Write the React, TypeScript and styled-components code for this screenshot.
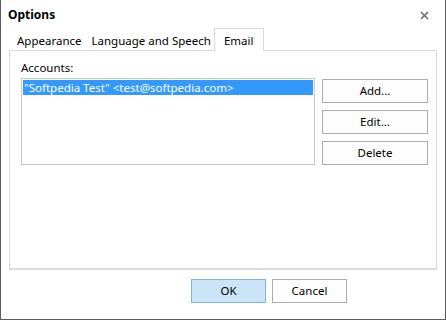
import React from "react";
import styled, { createGlobalStyle } from "styled-components";

const Global = createGlobalStyle`
  html, body { margin: 0; padding: 0; background: #ffffff; }
  body { font-family: "Noto Sans", "Open Sans", sans-serif; font-size: 11.5px; color: #000; }
  * { box-sizing: border-box; }
`;

const Window = styled.div`
  width: 446px;
  height: 320px;
  background: #ffffff;
  border-left: 1px solid #5c5c5c;
  border-right: 1px solid #5c5c5c;
  border-bottom: 1px solid #5c5c5c;
  display: flex;
  flex-direction: column;
`;

const TitleBar = styled.div`
  height: 28px;
  display: flex;
  align-items: center;
  justify-content: space-between;
  padding: 2px 16px 0 7px;
`;

const Title = styled.span`
  font-weight: 700;
  font-size: 12px;
  line-height: 1;
`;

const CloseIcon = styled.svg`
  width: 9px;
  height: 9px;
`;

const TabStrip = styled.div`
  height: 22px;
  display: flex;
  align-items: stretch;
  padding-left: 9px;
  position: relative;
  z-index: 1;
`;

const Tab = styled.div<{ $active?: boolean }>`
  display: flex;
  align-items: center;
  padding: 2px ${(p) => (p.$active ? "10px" : "2px")} 0 ${(p) => (p.$active ? "9px" : "6px")};
  margin-bottom: ${(p) => (p.$active ? "-1px" : "0")};
  background: #ffffff;
  border: 1px solid ${(p) => (p.$active ? "#d9d9d9" : "transparent")};
  border-bottom: none;
  white-space: nowrap;
  line-height: 1;
`;

const Panel = styled.div`
  margin: 0 8px;
  height: 220px;
  border: 1px solid #d9d9d9;
  border-bottom: 2px solid #dcdcdc;
  background: #ffffff;
  padding: 9px 8px 0 11px;
  display: flex;
  flex-direction: column;
`;

const Label = styled.div`
  line-height: 16px;
  height: 18px;
`;

const AccountsRow = styled.div`
  display: flex;
  gap: 7px;
  align-items: flex-start;
`;

const ListBox = styled.div`
  width: 296px;
  height: 87px;
  border: 1px solid #c8c8c8;
  padding: 1px;
  background: #fff;
`;

const ListItem = styled.div<{ $selected?: boolean }>`
  height: 15px;
  line-height: 15px;
  padding-left: 1px;
  background: ${(p) => (p.$selected ? "#3399ff" : "transparent")};
  color: ${(p) => (p.$selected ? "#ffffff" : "#000")};
  white-space: nowrap;
`;

const ButtonCol = styled.div`
  display: flex;
  flex-direction: column;
  gap: 7px;
  margin-top: 1px;
`;

const Button = styled.button<{ $primary?: boolean; $w: number }>`
  width: ${(p) => p.$w}px;
  height: 24px;
  font-family: inherit;
  font-size: 11.5px;
  color: #000;
  background: ${(p) => (p.$primary ? "#cce4f7" : "#fdfdfd")};
  border: 1px solid ${(p) => (p.$primary ? "#7fb4e5" : "#adadad")};
  padding: 0;
  line-height: 1;
  display: flex;
  align-items: center;
  justify-content: center;
`;

const Footer = styled.div`
  flex: 1;
  display: flex;
  justify-content: flex-end;
  align-items: flex-start;
  gap: 6px;
  padding: 9px 98px 0 0;
`;

export default function App() {
  return (
    <>
      <Global />
      <Window>
        <TitleBar>
          <Title>Options</Title>
          <CloseIcon viewBox="0 0 9 9">
            <path d="M1 1 L8 8 M8 1 L1 8" stroke="#707070" strokeWidth="1.6" />
          </CloseIcon>
        </TitleBar>
        <TabStrip>
          <Tab>Appearance</Tab>
          <Tab>Language and Speech</Tab>
          <Tab $active>Email</Tab>
        </TabStrip>
        <Panel>
          <Label>Accounts:</Label>
          <AccountsRow>
            <ListBox>
              <ListItem $selected>"Softpedia Test" &lt;test@softpedia.com&gt;</ListItem>
            </ListBox>
            <ButtonCol>
              <Button $w={106}>Add...</Button>
              <Button $w={106}>Edit...</Button>
              <Button $w={106}>Delete</Button>
            </ButtonCol>
          </AccountsRow>
        </Panel>
        <Footer>
          <Button $primary $w={75}>OK</Button>
          <Button $w={75}>Cancel</Button>
        </Footer>
      </Window>
    </>
  );
}
